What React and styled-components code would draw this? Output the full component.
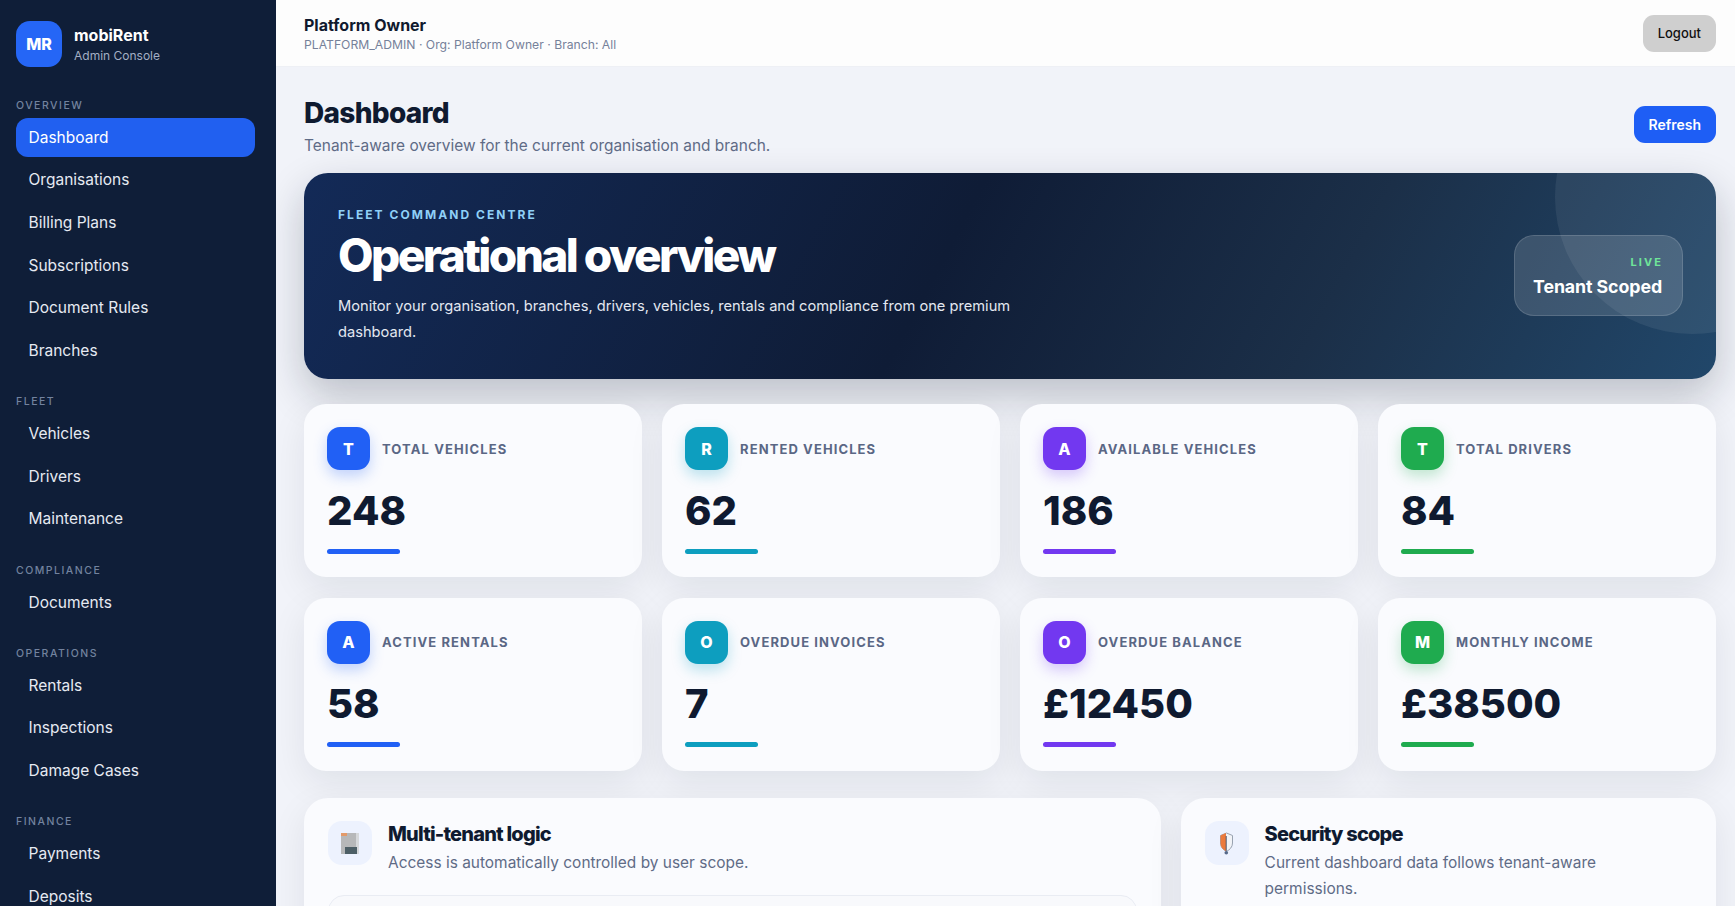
import React from "react";
import styled, { createGlobalStyle } from "styled-components";

const GlobalStyle = createGlobalStyle`
  html, body {
    margin: 0;
    height: 100%;
    overflow: hidden;
    background: #f1f3f9;
    font-family: Inter, "Noto Sans", sans-serif;
  }
  * { box-sizing: border-box; }
`;

const Shell = styled.div`
  display: flex;
  height: 100vh;
  overflow: hidden;
`;

const Sidebar = styled.aside`
  flex: 0 0 276px;
  height: 100vh;
  overflow: hidden;
  padding: 21px 21px 0 16px;
  background: #0f1e38;
  color: #fff;
`;

const Brand = styled.div`
  display: flex;
  align-items: center;
  gap: 12px;
  margin-bottom: 32px;
`;

const BrandLogo = styled.div`
  width: 46px;
  height: 46px;
  border-radius: 14px;
  display: flex;
  align-items: center;
  justify-content: center;
  background: #2566f6;
  font-size: 16px;
  font-weight: 800;
`;

const BrandText = styled.div`
  padding-top: 2px;
`;

const BrandName = styled.div`
  font-size: 16px;
  font-weight: 700;
  line-height: 20px;
`;

const BrandSub = styled.div`
  margin-top: 1px;
  font-size: 12px;
  line-height: 20px;
  color: #a3afc4;
`;

const NavGroup = styled.div`
  margin-bottom: 25.7px;
`;

const NavLabel = styled.div`
  height: 14px;
  margin-bottom: 5px;
  font-size: 10.5px;
  line-height: 14px;
  font-weight: 500;
  letter-spacing: 1.5px;
  color: #73839f;
`;

const NavItem = styled.div`
  height: 38.6px;
  margin-bottom: 4px;
  padding-left: 12.5px;
  display: flex;
  align-items: center;
  border-radius: 12px;
  font-size: 15.5px;
  color: ${(p) => (p.$active ? "#fff" : "#e6eaf2")};
  background: ${(p) => (p.$active ? "#2160f0" : "transparent")};
`;

const Main = styled.main`
  flex: 1;
  min-width: 0;
  height: 100vh;
  overflow: hidden;
`;

const TopBar = styled.header`
  height: 67px;
  padding: 0 19px 0 28px;
  display: flex;
  align-items: center;
  justify-content: space-between;
  background: #fdfdfd;
  border-bottom: 1px solid #eef0f5;
`;

const UserBlock = styled.div`
  padding-top: 2px;
`;

const UserName = styled.div`
  font-size: 16px;
  font-weight: 700;
  line-height: 20px;
  color: #10192e;
`;

const UserMeta = styled.div`
  margin-top: 2px;
  font-size: 12.2px;
  line-height: 16px;
  color: #76819a;
`;

const Button = styled.button`
  height: 37px;
  padding: 0 15px;
  border: 0;
  border-radius: 11px;
  font-family: inherit;
  font-size: ${(p) => (p.$primary ? "14px" : "13px")};
  font-weight: ${(p) => (p.$primary ? 600 : 500)};
  color: ${(p) => (p.$primary ? "#fff" : "#111")};
  background: ${(p) => (p.$primary ? "#1e5ef5" : "#cfcfcf")};
`;

const Content = styled.div`
  padding: 28px 19px 40px 28px;
`;

const PageHead = styled.div`
  display: flex;
  align-items: flex-start;
  justify-content: space-between;
  margin-bottom: 16px;
`;

const PageTitle = styled.h1`
  margin: 0;
  font-size: 28px;
  line-height: 36px;
  font-weight: 800;
  letter-spacing: -0.7px;
  color: #0f1a30;
`;

const PageSub = styled.p`
  margin: 4px 0 0;
  font-size: 15.45px;
  line-height: 22px;
  color: #5f6b86;
`;

const RefreshSlot = styled.div`
  margin-top: 11px;
`;

const HeroWrap = styled.div`
  border-radius: 24px;
  box-shadow: 0 16px 40px rgba(15, 23, 42, 0.24);
  margin-bottom: 25.5px;
`;

const Hero = styled.section`
  position: relative;
  height: 205.5px;
  padding: 34px 33px 0 34px;
  display: flex;
  align-items: flex-start;
  justify-content: space-between;
  overflow: hidden;
  border-radius: 24px;
  background: linear-gradient(118deg, #132a57 0%, #0f1c36 45%, #1b2f48 72%, #21476a 100%);
  color: #fff;
`;

const HeroCircle = styled.div`
  position: absolute;
  top: -113px;
  right: -113px;
  width: 274px;
  height: 274px;
  border-radius: 50%;
  background: rgba(255, 255, 255, 0.07);
`;

const HeroText = styled.div`
  position: relative;
  width: 690px;
`;

const Eyebrow = styled.div`
  font-size: 12px;
  line-height: 16px;
  font-weight: 700;
  letter-spacing: 2.05px;
  color: #8fd0f7;
`;

const HeroTitle = styled.h2`
  margin: 4px 0 10px;
  font-size: 46px;
  line-height: 56px;
  font-weight: 800;
  letter-spacing: -2.55px;
`;

const HeroDesc = styled.p`
  margin: 0;
  font-size: 14.65px;
  line-height: 26px;
  color: #e3e8f1;
`;

const LiveBox = styled.div`
  position: relative;
  width: 169px;
  height: 81px;
  margin-top: 28px;
  padding: 19px 20px 0 0;
  text-align: right;
  border-radius: 20px;
  border: 1px solid rgba(255, 255, 255, 0.14);
  background: rgba(255, 255, 255, 0.14);
`;

const LiveTag = styled.div`
  font-size: 11px;
  line-height: 14px;
  font-weight: 700;
  letter-spacing: 2.1px;
  margin-right: -1px;
  color: #6fe59a;
`;

const LiveText = styled.div`
  margin-top: 6px;
  font-size: 17.8px;
  line-height: 24px;
  font-weight: 700;
  letter-spacing: -0.1px;
`;

const StatGrid = styled.div`
  display: grid;
  grid-template-columns: repeat(4, 1fr);
  gap: 20.5px 20px;
  margin-bottom: 27.5px;
`;

const StatCard = styled.div`
  height: 173px;
  padding: 23px;
  border-radius: 22px;
  background: #fafbfe;
  box-shadow: 0 12px 36px rgba(15, 23, 42, 0.08);
`;

const StatHead = styled.div`
  display: flex;
  align-items: center;
  gap: 12px;
`;

const StatIcon = styled.div`
  width: 43px;
  height: 43px;
  border-radius: 13px;
  display: flex;
  align-items: center;
  justify-content: center;
  font-size: 16px;
  font-weight: 800;
  color: #fff;
  background: ${(p) => p.$color};
  box-shadow: 0 6px 14px ${(p) => p.$color}44;
`;

const StatLabel = styled.div`
  font-size: 13px;
  font-weight: 700;
  letter-spacing: 1.1px;
  color: #5a6785;
`;

const StatValue = styled.div`
  margin-top: 14.5px;
  font-size: 40px;
  line-height: 52px;
  font-weight: 800;
  color: #0f1a30;
`;

const StatBar = styled.div`
  width: 73px;
  height: 5px;
  margin-top: 12px;
  border-radius: 3px;
  background: ${(p) => p.$color};
`;

const PanelGrid = styled.div`
  display: grid;
  grid-template-columns: 1.6fr 1fr;
  gap: 20px;
`;

const Panel = styled.section`
  padding: 23px 24px;
  border-radius: 24px;
  background: #fafbfe;
  box-shadow: 0 12px 36px rgba(15, 23, 42, 0.08);
`;

const PanelHead = styled.div`
  display: flex;
  align-items: flex-start;
  gap: 16px;
`;

const PanelIcon = styled.div`
  flex: 0 0 44px;
  height: 44px;
  border-radius: 14px;
  display: flex;
  align-items: center;
  justify-content: center;
  background: #edf2fe;
`;

const PanelTitle = styled.h3`
  margin: 0;
  font-size: 20px;
  line-height: 26px;
  font-weight: 800;
  letter-spacing: -0.8px;
  color: #0f1a30;
`;

const PanelSub = styled.p`
  margin: 3px 0 0;
  font-size: 15.45px;
  line-height: 25.5px;
  color: #5f6b86;
`;

const InnerBox = styled.div`
  height: 120px;
  margin-top: 19px;
  border-radius: 16px;
  border: 1px solid #e9ecf3;
  background: #f8f9fc;
`;

const nav = [
  { label: "OVERVIEW", items: ["Dashboard", "Organisations", "Billing Plans", "Subscriptions", "Document Rules", "Branches"] },
  { label: "FLEET", items: ["Vehicles", "Drivers", "Maintenance"] },
  { label: "COMPLIANCE", items: ["Documents"] },
  { label: "OPERATIONS", items: ["Rentals", "Inspections", "Damage Cases"] },
  { label: "FINANCE", items: ["Payments", "Deposits"] },
];

const blue = "#2160f5";
const teal = "#0d9ebf";
const purple = "#7238f0";
const green = "#1fab4f";

const stats = [
  { letter: "T", label: "TOTAL VEHICLES", value: "248", color: blue },
  { letter: "R", label: "RENTED VEHICLES", value: "62", color: teal },
  { letter: "A", label: "AVAILABLE VEHICLES", value: "186", color: purple },
  { letter: "T", label: "TOTAL DRIVERS", value: "84", color: green },
  { letter: "A", label: "ACTIVE RENTALS", value: "58", color: blue },
  { letter: "O", label: "OVERDUE INVOICES", value: "7", color: teal },
  { letter: "O", label: "OVERDUE BALANCE", value: "£12450", color: purple },
  { letter: "M", label: "MONTHLY INCOME", value: "£38500", color: green },
];

const BuildingIcon = () => (
  <svg width="18" height="21" viewBox="0 0 18 21">
    <rect width="18" height="21" fill="#b7b8b9" />
    <rect width="6" height="3" fill="#e39a6a" />
    <rect x="15" width="3" height="21" fill="#d6d8da" />
    <rect x="4" y="14" width="12" height="7" fill="#4d5f66" />
  </svg>
);

const ShieldIcon = () => (
  <svg width="13" height="23" viewBox="0 0 13 23">
    <path d="M6.5 1 L12.5 3.5 V11 C12.5 15 10 17.5 6.5 19.5 C3 17.5 .5 15 .5 11 V3.5 Z" fill="#f1f3f7" stroke="#98a2b0" strokeWidth="1" />
    <path d="M6 1 L.5 3.5 V11 C.5 15 3 17.5 6 19.2 Z" fill="#ec7a3c" />
    <path d="M6.2 4 V19" stroke="#4a5568" strokeWidth="1" />
    <circle cx="6.3" cy="20.8" r="1.8" fill="#566a8a" />
  </svg>
);

export default function App() {
  return (
    <>
      <GlobalStyle />
      <Shell>
        <Sidebar>
          <Brand>
            <BrandLogo>MR</BrandLogo>
            <BrandText>
              <BrandName>mobiRent</BrandName>
              <BrandSub>Admin Console</BrandSub>
            </BrandText>
          </Brand>
          {nav.map((group) => (
            <NavGroup key={group.label}>
              <NavLabel>{group.label}</NavLabel>
              {group.items.map((item) => (
                <NavItem key={item} $active={item === "Dashboard"}>
                  {item}
                </NavItem>
              ))}
            </NavGroup>
          ))}
        </Sidebar>
        <Main>
          <TopBar>
            <UserBlock>
              <UserName>Platform Owner</UserName>
              <UserMeta>PLATFORM_ADMIN · Org: Platform Owner · Branch: All</UserMeta>
            </UserBlock>
            <Button>Logout</Button>
          </TopBar>
          <Content>
            <PageHead>
              <div>
                <PageTitle>Dashboard</PageTitle>
                <PageSub>Tenant-aware overview for the current organisation and branch.</PageSub>
              </div>
              <RefreshSlot>
                <Button $primary>Refresh</Button>
              </RefreshSlot>
            </PageHead>
            <HeroWrap>
              <Hero>
                <HeroCircle />
                <HeroText>
                  <Eyebrow>FLEET COMMAND CENTRE</Eyebrow>
                  <HeroTitle>Operational overview</HeroTitle>
                  <HeroDesc>
                    Monitor your organisation, branches, drivers, vehicles, rentals and compliance from one premium dashboard.
                  </HeroDesc>
                </HeroText>
                <LiveBox>
                  <LiveTag>LIVE</LiveTag>
                  <LiveText>Tenant Scoped</LiveText>
                </LiveBox>
              </Hero>
            </HeroWrap>
            <StatGrid>
              {stats.map((s) => (
                <StatCard key={s.label}>
                  <StatHead>
                    <StatIcon $color={s.color}>{s.letter}</StatIcon>
                    <StatLabel>{s.label}</StatLabel>
                  </StatHead>
                  <StatValue>{s.value}</StatValue>
                  <StatBar $color={s.color} />
                </StatCard>
              ))}
            </StatGrid>
            <PanelGrid>
              <Panel>
                <PanelHead>
                  <PanelIcon>
                    <BuildingIcon />
                  </PanelIcon>
                  <div>
                    <PanelTitle>Multi-tenant logic</PanelTitle>
                    <PanelSub>Access is automatically controlled by user scope.</PanelSub>
                  </div>
                </PanelHead>
                <InnerBox />
              </Panel>
              <Panel>
                <PanelHead>
                  <PanelIcon>
                    <ShieldIcon />
                  </PanelIcon>
                  <div>
                    <PanelTitle>Security scope</PanelTitle>
                    <PanelSub>Current dashboard data follows tenant-aware permissions.</PanelSub>
                  </div>
                </PanelHead>
              </Panel>
            </PanelGrid>
          </Content>
        </Main>
      </Shell>
    </>
  );
}
